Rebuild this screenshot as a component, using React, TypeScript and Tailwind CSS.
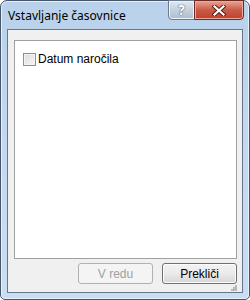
export default function App() {
  const font = { fontFamily: '"Noto Sans", "Open Sans", sans-serif' };
  const uiFont = { fontFamily: '"Liberation Sans", Arial, sans-serif' };
  return (
    <div className="w-[250px] h-[300px] bg-white" style={font}>
      <div className="relative flex h-full flex-col rounded-t-[7px] rounded-b-[5px] border border-[#48566a] bg-gradient-to-b from-[#b9d1ea] via-[#c4d9f1] to-[#c9ddf3] shadow-[inset_0_0_0_1px_#e6f0fb]">
        {/* title bar */}
        <div className="flex h-[28px] shrink-0 items-center pl-[7px] pt-[2px] text-[12px] text-black">
          Vstavljanje časovnice
        </div>
        <div className="absolute right-[5px] top-[-1px] flex h-[20px]">
          <div className="flex w-[27px] items-center justify-center rounded-bl-[4px] border border-[#6b7a8c] bg-gradient-to-b from-[#dfe8f2] via-[#c4d1df] to-[#aebdcf] shadow-[inset_0_0_0_1px_#eef3f9]">
            <span className="text-[14px] font-bold leading-none text-white [text-shadow:0_0_1px_#3d4a5a,0_0_1px_#3d4a5a]">?</span>
          </div>
          <div className="-ml-px flex w-[50px] items-center justify-center rounded-br-[4px] border border-[#6b2a22] bg-gradient-to-b from-[#e8a496] via-[#c85a47] to-[#c2402c] shadow-[inset_0_0_0_1px_#eca99b]">
            <svg width="14" height="11" viewBox="0 0 14 11">
              <path d="M2.5 1.5 L11.5 9.5 M11.5 1.5 L2.5 9.5" stroke="#4a1d16" strokeWidth="4" strokeLinecap="square" />
              <path d="M2.5 1.5 L11.5 9.5 M11.5 1.5 L2.5 9.5" stroke="#fff" strokeWidth="2.2" strokeLinecap="square" />
            </svg>
          </div>
        </div>

        {/* client area */}
        <div className="mx-[6px] mb-[6px] flex flex-1 flex-col border border-[#65778d] bg-[#f0f0f0] pl-[6px] pr-[5px] pt-[10px]" style={uiFont}>
          <div className="h-[219px] border border-[#a0a0a0] bg-white pl-[8px] pt-[9px]">
            <label className="flex items-center gap-[2px] text-[12px] text-black">
              <span className="h-[13px] w-[13px] border border-[#8e8f8f] bg-gradient-to-br from-[#dcdcdc] to-[#f6f6f6] shadow-[inset_0_0_0_1px_#f4f4f4]" />
              <span>Datum naročila</span>
            </label>
          </div>
          <div className="mt-[4px] flex justify-end gap-[9px] text-[12px]">
            <button className="h-[21px] w-[75px] rounded-[3px] border border-[#adb2b5] bg-[#f4f4f4] text-[#a0a0a0]">
              V redu
            </button>
            <button className="h-[21px] w-[75px] rounded-[3px] border border-[#707070] bg-gradient-to-b from-[#f2f2f2] via-[#ebebeb] to-[#d6d6d6] text-black shadow-[inset_0_0_0_1px_#fcfcfc]">
              Prekliči
            </button>
          </div>
          <div className="flex flex-1 justify-end">
            <svg width="7" height="7" viewBox="0 0 7 7" className="mt-auto mb-[1px]">
              <rect x="5" y="1" width="2" height="2" fill="#b8b8b8" />
              <rect x="3" y="3" width="2" height="2" fill="#b8b8b8" />
              <rect x="5" y="3" width="2" height="2" fill="#b8b8b8" />
              <rect x="1" y="5" width="2" height="2" fill="#b8b8b8" />
              <rect x="3" y="5" width="2" height="2" fill="#b8b8b8" />
              <rect x="5" y="5" width="2" height="2" fill="#b8b8b8" />
            </svg>
          </div>
        </div>
      </div>
    </div>
  );
}
